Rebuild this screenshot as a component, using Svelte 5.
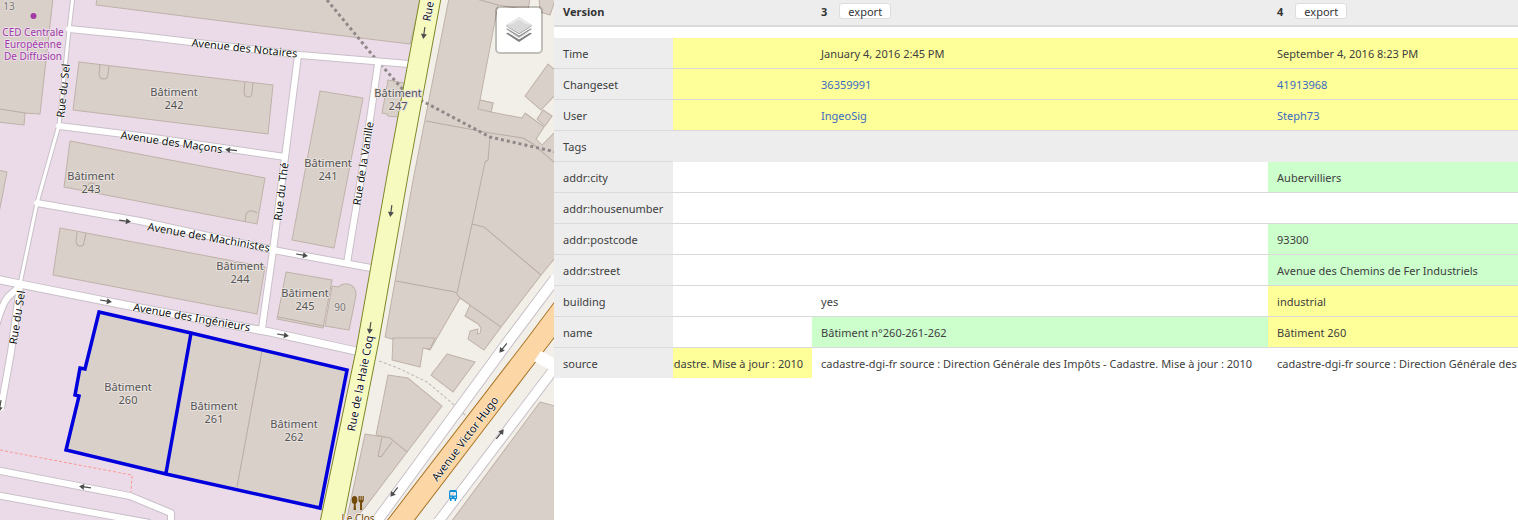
<script>
  const source = 'cadastre-dgi-fr source : Direction Générale des Impôts - Cadastre. Mise à jour : 2010';

  const rows = [
    { label: 'Time', cells: [['', 'mod'], ['January 4, 2016 2:45 PM', 'mod'], ['September 4, 2016 8:23 PM', 'mod']] },
    { label: 'Changeset', link: true, cells: [['', 'mod'], ['36359991', 'mod'], ['41913968', 'mod']] },
    { label: 'User', link: true, cells: [['', 'mod'], ['IngeoSig', 'mod'], ['Steph73', 'mod']] },
    { label: 'Tags', section: true, cells: [] },
    { label: 'addr:city', cells: [['', ''], ['', ''], ['Aubervilliers', 'new']] },
    { label: 'addr:housenumber', cells: [['', ''], ['', ''], ['', '']] },
    { label: 'addr:postcode', cells: [['', ''], ['', ''], ['93300', 'new']] },
    { label: 'addr:street', cells: [['', ''], ['', ''], ['Avenue des Chemins de Fer Industriels', 'new']] },
    { label: 'building', cells: [['', ''], ['yes', ''], ['industrial', 'mod']] },
    { label: 'name', cells: [['', ''], ['Bâtiment n°260-261-262', 'new'], ['Bâtiment 260', 'mod']] },
    { label: 'source', cells: [['Cadastre. Mise à jour : 2010', 'mod'], [source, ''], [source, '']] }
  ];

  const buildings = [
    'M-2-2H53L40 114L25 113L24 125L-2 122Z',
    'M97-2L96 5L270 27L410 44L421-2Z',
    'M79 62L273 85L268 134L73 110Z',
    'M70 141L265 178L257 224L64 187Z',
    'M60 228L265 267L257 314L53 275Z',
    'M-2 170L7 172L-2 218Z',
    'M320 91L363 98L334 248L292 240Z',
    'M388 80L404 83L399 117L388 116L387 114L382 113Z',
    'M286 272L332 280L323 328L277 319Z',
    'M332 286L338 287Q343 283 348 284Q356 286 356 295L349 330L325 326Z',
    'M449-2L413 180L385 337L427 349L430 350L460 298L470 305L465 316L478 324L481 328L480 333L477 334L478 329L470 331L468 339L484 350L501 327L541 275L555 258V132L542 145L536 139L544 127L525 113L522 118L491 112L493 103L480 100L498 5L528 10L530-2Z',
    'M480 100L493 103L491 112L478 109Z',
    'M539-2L540 12L550 15L555 0V-2Z',
    'M555 70L548 64L525 96L541 110L555 95Z',
    'M543 110L552 116L545 126L537 119Z',
    'M393 338L392 360L420 367L423 348L430 349L435 338Z',
    'M447 354L475 362L453 392L431 375Z',
    'M388 375L408 378L442 406L407 452L390 438L376 435Z',
    'M365 434L390 438L407 452L366 506L352 522H346Z',
    'M540 402L555 406V522H451Z',
    'M99 312L191 333L347 370L320 508L166 474L66 450L79 396L75 395L80 368L85 369Z'
  ];

  const parcels = [
    'M0 109L25 113',
    'M100 64L99 74Q99 79 104 79Q108 79 108 74L109 66',
    'M245 82L244 91Q244 97 248 97Q252 97 252 92L253 83',
    'M245 222L246 214Q250 208 257 213',
    'M86 191Q87 182 92 183Q97 184 96 193',
    'M77 232L76 241Q77 247 81 246Q84 246 84 242L86 233',
    'M278 317L324 326',
    'M382 437L378 456L381 457L392 442',
    'M262 351L237 487',
    'M426 121L490 133L523 138L533 144L555 163',
    'M490 136L488 160L485 162L472 224L457 293',
    'M472 224L484 227L541 275',
    'M396 281L455 292L460 298',
    'M473-2L498 5',
    'M470 305L501 327'
  ];

  const streets = [
    { d: 'M73-4L69 30L59 125L37 203L20 284', w: 4 },
    { d: 'M69 29L140 36L300 55L409 64', w: 7 },
    { d: 'M59 126L140 136L285 157', w: 7 },
    { d: 'M37 203L140 221L273 250L371 268', w: 7 },
    { d: 'M-4 279L20 284L140 308L270 332L356 351', w: 8 },
    { d: 'M298 55L285 157L273 250L262 328', w: 7 },
    { d: 'M378 64L364 160L347 263', w: 7 },
    { d: 'M20 286L8 297Q2 304-4 326', w: 7 },
    { d: 'M20 286L11 352L1 408', w: 7 },
    { d: 'M-4 470L130 496L171 513V524', w: 7 },
    { d: 'M-4 495L150 523', w: 7 },
    { d: 'M555 279L510 339L376 522', w: 11 },
    { d: 'M557 365L438 522', w: 10 }
  ];

  const arrows = [
    [424, 33, 98], [391, 211, 98], [370, 328, 98], [231, 150, 186], [125, 221, 8],
    [302, 255, 10], [106, 301, 10], [283, 335, 10], [85, 487, 188], [503, 348, 128],
    [394, 492, 128], [500, 434, -52], [0, 406, 100]
  ];

  const streetLabels = [
    ['Avenue des Notaires', 244, 52, 6],
    ['Avenue des Maçons', 171, 146, 8],
    ['Avenue des Machinistes', 208, 241, 10],
    ['Avenue des Ingénieurs', 191, 321, 10],
    ['Rue du Sel', 67, 91, -84],
    ['Rue du Sel', 21, 318, -81],
    ['Rue du Thé', 285, 192, -83],
    ['Rue de la Vanille', 367, 164, -81],
    ['Rue de la Haie Coq', 364, 384, -79],
    ['Rue', 432, 12, -80],
    ['Avenue Victor Hugo', 468, 441, -53]
  ];

  const buildingLabels = [
    [242, 174, 96], [243, 91, 180], [241, 328, 167], [247, 398, 97], [244, 240, 270],
    [245, 305, 297], [260, 128, 391], [261, 214, 410], [262, 294, 428]
  ];
</script>

<main>
  <section class="map" aria-label="Map">
    <svg viewBox="0 0 554 520" preserveAspectRatio="xMinYMin slice">
      <path class="industrial" d="M0 0H430L398 170L366 350L331 520H0Z" />
      <g class="building">
        {#each buildings as d}<path {d} />{/each}
      </g>
      <g class="parcel">
        {#each parcels as d}<path {d} />{/each}
      </g>
      <path class="boundary" d="M327 0L374 57L405 92L426 103L490 137L556 152" />
      <path class="fence" d="M0 450L132 475L131 492" />
      <path class="footway" d="M379 361L398 368L427 382L452 403L466 416" />
      {#each streets as s}<path class="casing" d={s.d} stroke-width={s.w + 1} />{/each}
      {#each streets as s}<path class="street" d={s.d} stroke-width={s.w - 1} />{/each}
      <path class="secondary" d="M420-2L388 170L356 350L320 522H343L379 340L409 170L441-2Z" />
      <path class="primary" d="M556 300L526 340L386 522H413L556 335Z" />
      <path class="junction" d="M541 351L556 359V372L546 368L534 361Z" />
      <path class="selected" d="M99 312L191 333L347 370L320 508L166 474L66 450L79 396L75 395L80 368L85 369Z M191 333L166 473" />
      {#each arrows as [x, y, a]}
        <path class="arrow" transform="translate({x} {y}) rotate({a})" d="M-6-0.6H1V-3L6 0L1 3V0.6H-6Z" />
      {/each}
      {#each streetLabels as [name, x, y, a]}
        <text class="street-name" transform="translate({x} {y}) rotate({a})">{name}</text>
      {/each}
      {#each buildingLabels as [n, x, y]}
        <text class="building-name" {x} {y}>Bâtiment<tspan {x} dy="13">{n}</tspan></text>
      {/each}
      <text class="number" x="9" y="10">13</text>
      <text class="number" x="340" y="311">90</text>
      <circle cx="33.500" cy="16" r="3" fill="#a03aa5" />
      <text class="office" x="33" y="36">CED Centrale<tspan x="33" dy="12">Européenne</tspan><tspan x="33" dy="12">De Diffusion</tspan></text>
      <g fill="#734a08">
        <ellipse cx="354.500" cy="500" rx="2.800" ry="4" />
        <path d="M354 503H355.500L356 510H353.500Z" />
        <path d="M358.500 496H359.700V500H360.500V496H361.700V500H362.500V496H363.700V501L362 503V510H360V503L358.500 501Z" />
      </g>
      <text class="food" x="358" y="522">Le Clos</text>
      <path fill="#0d8fd4" fill-rule="evenodd" d="M450.500 490H455.500Q457 490 457 492V499H456V501H454.500V499H451.500V501H450V499H449V492Q449 490 450.500 490ZM450.200 492V495.500H455.800V492ZM450.300 496.700V498H451.600V496.700ZM454.400 496.700V498H455.700V496.700Z" />
    </svg>
    <button class="layers" type="button" aria-label="Layers">
      <svg viewBox="0 0 26 26">
        <path fill="#7f7f7f" d="M0 16.500L3 15L13 21L23 15L26 16.500L13 25Z" />
        <path fill="#fff" d="M0 13L13 21L26 13V14.500L13 22.500L0 14.500Z" />
        <path fill="#979797" d="M0 12L3 10.500L13 16.500L23 10.500L26 12L13 20.500Z" />
        <path fill="#fff" d="M0 9L13 17L26 9V10.500L13 18.500L0 10.500Z" />
        <path fill="#a6a6a6" d="M0 8L13 16L26 8V9L13 17.200L0 9Z" />
        <path fill="#d9d9d9" d="M0 8L13 0L26 8L13 16Z" />
        <path fill="#e8e8e8" d="M0 8L13 0L26 8L20 7L13 3L6 7Z" />
      </svg>
    </button>
  </section>

  <section class="history" aria-label="Object history">
    <table>
      <colgroup>
        <col class="c-label" /><col class="c-prev" /><col class="c-version" /><col />
      </colgroup>
      <thead>
        <tr>
          <th scope="col">Version</th>
          <th></th>
          <th scope="col"><span>3</span><button type="button">export</button></th>
          <th scope="col"><span>4</span><button type="button">export</button></th>
        </tr>
      </thead>
      <tbody>
        <tr class="spacer"><td colspan="4"></td></tr>
        {#each rows as row}
          <tr class:section={row.section}>
            <th scope="row">{row.label}</th>
            {#if row.section}
              <td colspan="3"></td>
            {/if}
            {#each row.cells as [value, state], i}
              <td class={state} class:prev={i === 0}>
                {#if row.link && value}
                  <a href="#{value}">{value}</a>
                {:else}
                  <div>{value}</div>
                {/if}
              </td>
            {/each}
          </tr>
        {/each}
      </tbody>
    </table>
  </section>
</main>

<style>
  :global(body) {
    margin: 0;
    background: #fff;
    overflow: hidden;
  }

  main {
    display: grid;
    grid-template-columns: 36.5% minmax(0, 1fr);
    height: 100vh;
    overflow: hidden;
    font-family: 'Noto Sans', 'Open Sans', sans-serif;
    font-size: 11px;
    color: #404040;
  }

  .map {
    position: relative;
    overflow: hidden;
    background: #f2efe9;
  }

  .map > svg {
    display: block;
    width: 100%;
    height: 100%;
    font-family: 'Noto Sans', 'Open Sans', sans-serif;
    font-size: 11px;
    text-anchor: middle;
  }

  .map path {
    stroke-linejoin: round;
  }

  .industrial { fill: #ebdbe9; }
  .building path { fill: #d9d0c9; stroke: #bfb2a9; stroke-width: 1; }
  .parcel path { fill: none; stroke: #b9aca5; stroke-width: 1; }

  .boundary {
    fill: none;
    stroke: #8f8788;
    stroke-width: 3;
    stroke-dasharray: 3 3;
  }

  .fence { fill: none; stroke: #fa9a94; stroke-width: 1; stroke-dasharray: 3 2; }
  .footway { fill: none; stroke: #b9b9b9; stroke-width: 1; stroke-dasharray: 3 2; }
  .casing { fill: none; stroke: #c9c0c8; }
  .street { fill: none; stroke: #fff; stroke-linecap: round; }
  .secondary { fill: #f7fabf; stroke: #7d8729; stroke-width: 1; }
  .primary { fill: #fcd6a4; stroke: #a87427; stroke-width: 1; }
  .junction { fill: #fff; }
  .map .selected { fill: none; stroke: #0000dd; stroke-width: 3.5; stroke-linejoin: miter; }
  .arrow { fill: #4d4d4d; }

  text {
    paint-order: stroke;
    stroke-linejoin: round;
  }

  .street-name { fill: #111; stroke: #fff; stroke-width: 1; }
  .building-name { fill: #555; stroke: #e8e2de; stroke-width: 2; }
  .number { fill: #777; stroke: #e4ddd8; stroke-width: 2; font-size: 10px; }
  .office { fill: #a03aa5; stroke: #eadfe8; stroke-width: 2; font-size: 10px; }
  .food { fill: #734a08; stroke: #f2efe9; stroke-width: 2; font-size: 10px; }

  .layers {
    position: absolute;
    top: 6px;
    right: 11px;
    display: grid;
    place-items: center;
    width: 48px;
    height: 48px;
    padding: 0;
    border: 2px solid rgba(0, 0, 0, 0.2);
    border-radius: 5px;
    background: #fff;
    background-clip: padding-box;
  }

  .layers svg {
    width: 26px;
    height: 26px;
  }

  .history {
    overflow: hidden;
  }

  table {
    width: 100%;
    table-layout: fixed;
    border-collapse: separate;
    border-spacing: 0;
  }

  .c-label { width: 119px; }
  .c-prev { width: 139px; }
  .c-version { width: 456px; }

  th,
  td {
    box-sizing: border-box;
    height: 31px;
    padding: 2px 9px 0;
    border-bottom: 1px solid #dadada;
    line-height: 18px;
    text-align: left;
    white-space: nowrap;
    vertical-align: middle;
  }

  tbody th {
    background: #ededed;
    font-weight: 400;
  }

  thead th {
    height: 27px;
    padding: 0 9px 2px;
    border-bottom: 2px solid #dadada;
    background: #ededed;
    color: #333;
    font-weight: 700;
  }

  thead button {
    height: 16px;
    margin-left: 12px;
    padding: 1px 8px 0;
    border: 1px solid #ddd;
    border-radius: 3px;
    background: #fff;
    color: #333;
    font-family: inherit;
    font-size: 11px;
    line-height: 13px;
  }

  .spacer td {
    height: 11px;
    padding: 0;
    border: 0;
  }

  .section td {
    background: #ededed;
    border-color: #ededed;
  }

  .mod { background: #ffff99; }
  .new { background: #ccffcc; }

  .prev div {
    display: flex;
    justify-content: flex-end;
  }

  .prev {
    overflow: hidden;
  }

  tbody tr:last-child > * {
    height: 30px;
    border-bottom: 0;
  }

  a {
    color: #3b6bc0;
    text-decoration: none;
  }
</style>
